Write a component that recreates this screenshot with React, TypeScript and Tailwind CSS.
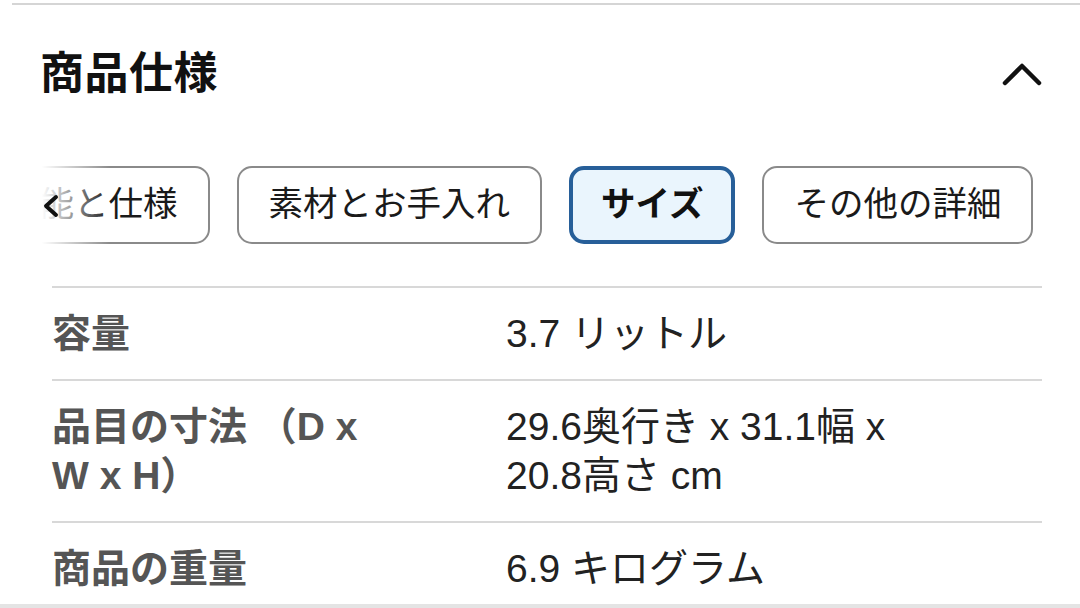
import React from 'react';

const FONT = "font-['Liberation_Sans','Noto_Sans_CJK_JP',sans-serif]";

const TABS = [
  { id: 'feat', label: '機能と仕様' },
  { id: 'care', label: '素材とお手入れ' },
  { id: 'size', label: 'サイズ', active: true },
  { id: 'other', label: 'その他の詳細' },
];

const ROWS = [
  { label: '容量', value: '3.7 リットル' },
  { label: '品目の寸法 （D x W x H）', value: '29.6奥行き x 31.1幅 x 20.8高さ cm' },
  { label: '商品の重量', value: '6.9 キログラム' },
];

export default function App() {
  return (
    <div className={`w-[1080px] h-[608px] overflow-hidden bg-white ${FONT}`}>
      <div className="pt-[3px]">
        <div className="ml-[12px] h-[2px] bg-[#d5d5d5]" />
      </div>

      {/* header */}
      <div className="flex items-center justify-between pl-[40px] pr-[36px] h-[142px] pb-[4px]">
        <h2 className="text-[44px] font-bold text-[#111] leading-none tracking-[0.5px]">商品仕様</h2>
        <svg width="40" height="26" viewBox="0 0 40 26" fill="none" className="mr-[2px]">
          <path d="M3 22 L20 5 L37 22" stroke="#111" strokeWidth="4.5" strokeLinecap="round" strokeLinejoin="round" />
        </svg>
      </div>

      {/* tabs */}
      <div className="relative mt-[18px] overflow-hidden">
        <div className="flex gap-[27px] py-[1px]">
          {TABS.map((t, i) => (
            <div
              key={t.id}
              className={`shrink-0 h-[78px] flex items-center rounded-[15px] text-[34.5px] whitespace-nowrap ${
                i === 0 ? 'ml-[-27px]' : ''
              } ${
                t.active
                  ? 'border-[4px] border-[#275f99] bg-[#eaf5fd] font-bold text-[#111] px-[28px]'
                  : 'border-[2px] border-[#8a8a8a] text-[#1a1a1a] px-[30px]'
              }`}
            >
              {t.label}
            </div>
          ))}
        </div>
        <div className="absolute left-0 top-0 bottom-0 w-[110px] bg-gradient-to-r from-white from-[38%] to-white/0 flex items-center">
          <svg width="20" height="24" viewBox="0 0 20 24" fill="none" className="ml-[41px] mt-[2px]">
            <path d="M15 3 L5 12 L15 21" stroke="#111" strokeWidth="4" strokeLinecap="round" strokeLinejoin="round" />
          </svg>
        </div>
      </div>

      {/* spec table */}
      <div className="mt-[41px] ml-[52px] mr-[38px]">
        {ROWS.map((r) => (
          <div key={r.label} className="flex border-t-[2px] border-[#d8d8d8] py-[21px] text-[39px] leading-[49px]">
            <div className="w-[454px] shrink-0 pr-[120px] font-bold text-[#555]">{r.label}</div>
            <div className="flex-1 text-[#222] break-keep">{r.value}</div>
          </div>
        ))}
      </div>
      <div className="fixed left-0 right-0 top-[604px] h-[4px] bg-[#e4e4e4]" />
    </div>
  );
}
